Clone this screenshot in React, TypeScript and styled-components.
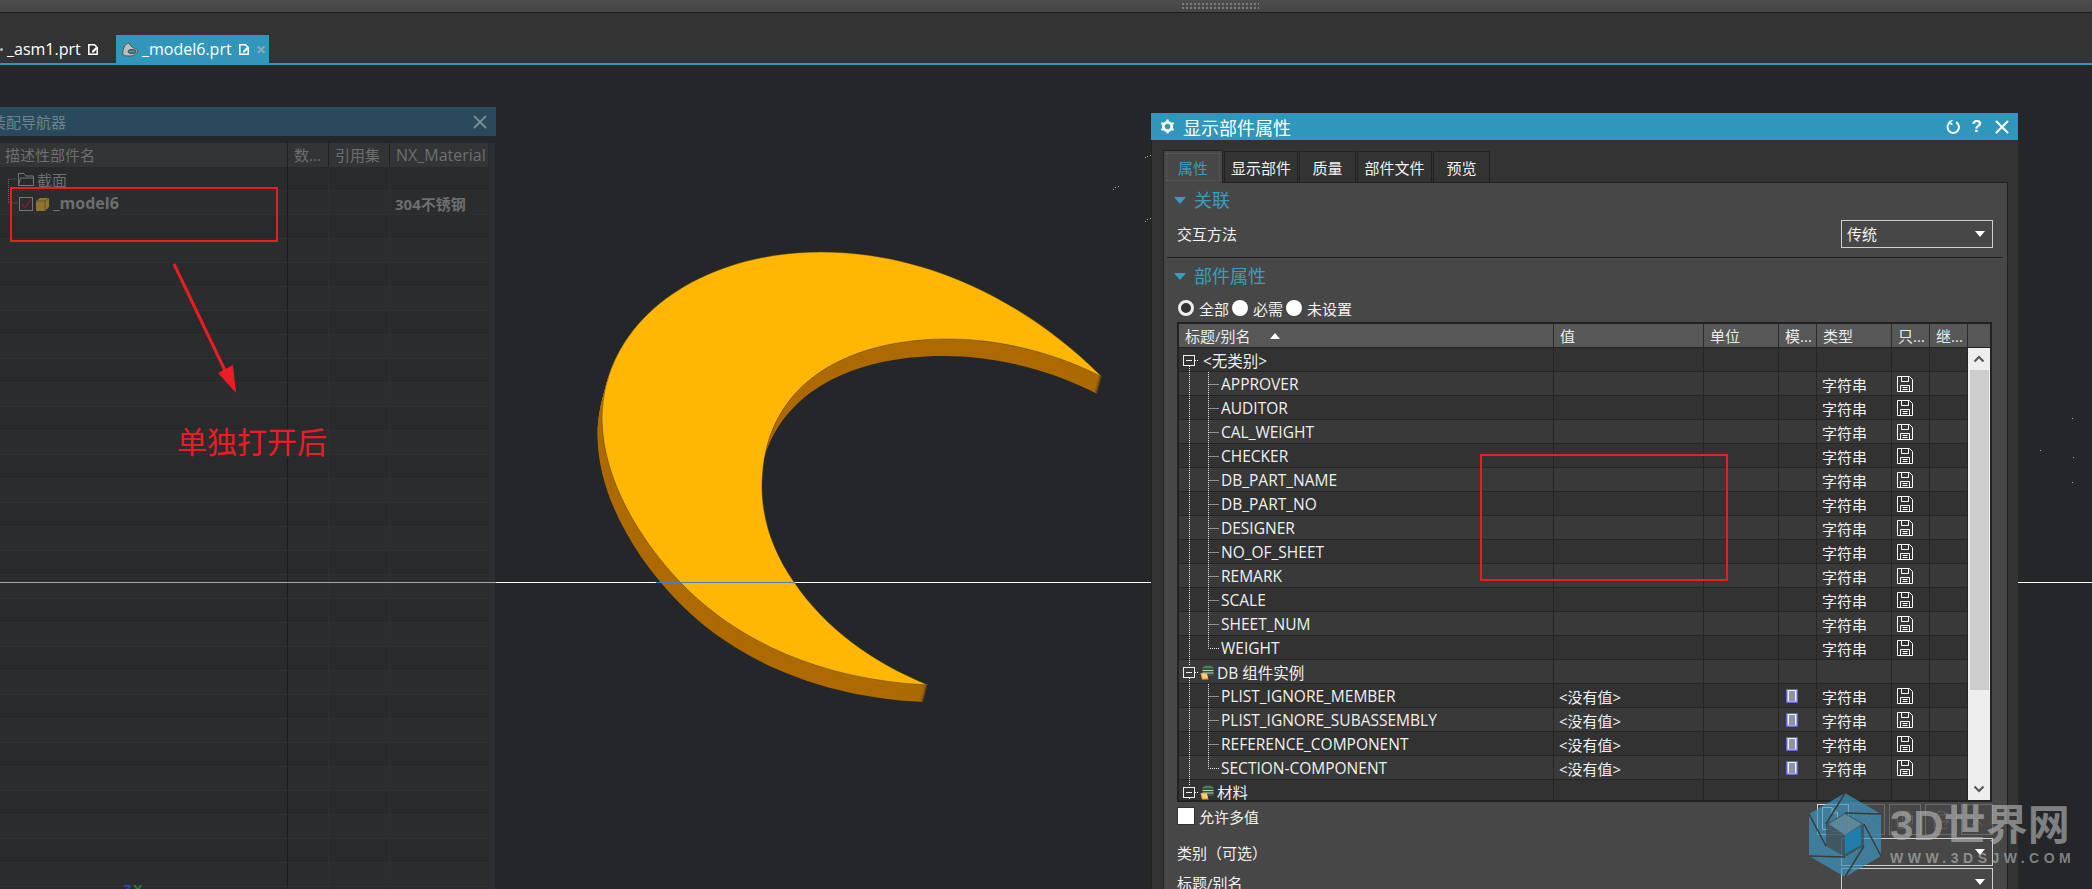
import React from "react";
import styled, { createGlobalStyle } from "styled-components";
import { Scissors, Files, ClipboardPaste, X } from "lucide-react";

const UI_FONT = `"Open Sans", "Noto Sans CJK SC", sans-serif`;
const TABLE_COLUMNS = "375px 150px 75px 38px 75px 38px 38px";

const CRESCENT =
  "M1102 377 C1025 300 925 252 821 252 C700 252 602 320 602 420 C603 480 640 540 680 582 C735 640 820 680 928 685 C872 662 825 628 794 582 C775 555 762 522 762 487 C762 385 845 339 948 339 C1000 339 1056 353 1102 377 Z";

const SPECKS = [
  [1145, 157], [1147, 156], [1150, 155], [1113, 189], [1115, 187], [1118, 186],
  [1145, 221], [1147, 219], [1150, 218], [2072, 418], [2040, 450], [2073, 457], [2072, 482],
];

const PROPERTY_ROWS: RowData[] = [
  { kind: "group", name: "<无类别>", first: true },
  { kind: "child", name: "APPROVER", type: "字符串", save: true },
  { kind: "child", name: "AUDITOR", type: "字符串", save: true },
  { kind: "child", name: "CAL_WEIGHT", type: "字符串", save: true },
  { kind: "child", name: "CHECKER", type: "字符串", save: true },
  { kind: "child", name: "DB_PART_NAME", type: "字符串", save: true },
  { kind: "child", name: "DB_PART_NO", type: "字符串", save: true },
  { kind: "child", name: "DESIGNER", type: "字符串", save: true },
  { kind: "child", name: "NO_OF_SHEET", type: "字符串", save: true },
  { kind: "child", name: "REMARK", type: "字符串", save: true },
  { kind: "child", name: "SCALE", type: "字符串", save: true },
  { kind: "child", name: "SHEET_NUM", type: "字符串", save: true },
  { kind: "last", name: "WEIGHT", type: "字符串", save: true },
  { kind: "group", name: "DB 组件实例", db: true },
  { kind: "child", name: "PLIST_IGNORE_MEMBER", value: "<没有值>", type: "字符串", save: true, doc: true },
  { kind: "child", name: "PLIST_IGNORE_SUBASSEMBLY", value: "<没有值>", type: "字符串", save: true, doc: true },
  { kind: "child", name: "REFERENCE_COMPONENT", value: "<没有值>", type: "字符串", save: true, doc: true },
  { kind: "last", name: "SECTION-COMPONENT", value: "<没有值>", type: "字符串", save: true, doc: true },
  { kind: "group", name: "材料", db: true },
];

type RowKind = "group" | "child" | "last";

type RowData = {
  kind: RowKind;
  name: string;
  value?: string;
  type?: string;
  save?: boolean;
  doc?: boolean;
  db?: boolean;
  first?: boolean;
};

function TreeGuide({ kind, first }: { kind: RowKind; first?: boolean }) {
  if (kind === "group") {
    return (
      <GuideSvg width={21} height={24} viewBox="0 0 21 24">
        <path
          d={first ? "M10.5 18V24M16 12.5H20" : "M10.5 0V6M10.5 18V24M16 12.5H20"}
          stroke="#eee"
          strokeDasharray="1 1"
          fill="none"
        />
        <rect x="4.5" y="7.5" width="11" height="10" fill="none" stroke="#eee" />
        <path d="M7 12.5H13" stroke="#eee" />
      </GuideSvg>
    );
  }
  return (
    <GuideSvg width={42} height={24} viewBox="0 0 42 24">
      <path d="M10.5 0V24" stroke="#eee" strokeDasharray="1 1" fill="none" />
      <path
        d={kind === "last" ? "M29.5 0V12.5H40" : "M29.5 0V24M29.5 12.5H40"}
        stroke="#eee"
        strokeDasharray="1 1"
        fill="none"
      />
    </GuideSvg>
  );
}

function DbIcon() {
  return (
    <svg width="14" height="15" viewBox="0 0 14 15">
      <ellipse cx="8" cy="3" rx="5.5" ry="2.5" fill="#4f7d53" />
      <rect x="2.5" y="3" width="11" height="8" fill="#39583f" />
      <path d="M2.5 5.5H13.5M2.5 8H13.5" stroke="#b8c8b8" />
      <path d="M0.5 8H7L8.5 14.5H2Z" fill="#f0a83a" />
      <path d="M2 10H7M2.5 12H7.5" stroke="#fff2c8" />
    </svg>
  );
}

function PageIcon() {
  return (
    <svg width="12" height="14" viewBox="0 0 12 14">
      <rect x="0" y="0" width="12" height="14" fill="#5f68d8" />
      <rect x="1.5" y="1" width="9" height="11.5" fill="#eef0ff" />
      <path d="M3 3H9M3 5H9M3 7H9M3 9H9M3 11H9" stroke="#33353d" />
    </svg>
  );
}

function FloppyIcon() {
  return (
    <svg width="16" height="16" viewBox="0 0 16 16" fill="none" stroke="#fff">
      <path d="M0.5 0.5H12.5L15.5 3.5V15.5H0.5Z" />
      <path d="M4.5 0.5V5.5H11.5V0.5" />
      <path d="M3.5 15.5V9.5H12.5V15.5M5.5 11.5H10.5M5.5 13.5H10.5" />
    </svg>
  );
}

function TabDocIcon() {
  return (
    <svg width="10" height="11" viewBox="0 0 10 11">
      <path d="M0.8 0.8H6.5L9.2 3.5V10.2H0.8Z" fill="none" stroke="#fff" strokeWidth="1.5" />
      <path d="M4 7L8 3L9.5 4.5L5.5 8.5H4Z" fill="#fff" />
    </svg>
  );
}

export default function App() {
  return (
    <Page>
      <GlobalStyle />
      <TopBar>
        <Grip />
      </TopBar>
      <TabStrip>
        <FileTab>
          <LeadDot />
          <span>_asm1.prt</span>
          <TabDocIcon />
        </FileTab>
        <FileTab $active>
          <TabModelIcon width="17" height="15" viewBox="0 0 17 15">
            <path d="M1 13C0 8 3 1 7 1C8 4 11 6 16 8C15 12 12 14 8 14C5 14 3 14 1 13Z" fill="#b9c0c2" stroke="#555" />
            <ellipse cx="10" cy="9.5" rx="4" ry="2" fill="#3c8aa8" stroke="#444" />
          </TabModelIcon>
          <span>_model6.prt</span>
          <TabDocIcon />
          <TabClose>×</TabClose>
        </FileTab>
      </TabStrip>
      <Workspace>
        <NavPanel>
          <NavTitle>
            <span>装配导航器</span>
            <X size={22} color="#7b8b94" strokeWidth={2} />
          </NavTitle>
          <NavBody>
            <NavHeader>
              <NavHeadCell>描述性部件名</NavHeadCell>
              <NavHeadCell>数...</NavHeadCell>
              <NavHeadCell>引用集</NavHeadCell>
              <NavHeadCell>NX_Material</NavHeadCell>
            </NavHeader>
            <NavRow $alt={false}>
              <NavCell>
                <svg width="34" height="24" viewBox="0 0 34 24">
                  <path d="M8.5 12V24M8.5 12H17" stroke="#666" strokeDasharray="1 1" fill="none" />
                  <path d="M18.5 18.5V6.5H24L26 9H33.5V18.5ZM18.5 18.5L20.5 11H33.5" stroke="#777" fill="none" />
                </svg>
                <NavLabel>截面</NavLabel>
              </NavCell>
              <NavCell />
              <NavCell />
              <NavCell />
            </NavRow>
            <NavRow $alt>
              <NavCell>
                <svg width="50" height="24" viewBox="0 0 50 24">
                  <path d="M8.5 0V12H18" stroke="#666" strokeDasharray="1 1" fill="none" />
                  <rect x="19.5" y="6.5" width="13" height="13" fill="none" stroke="#777" />
                  <path d="M22 13L25 17L31 8" stroke="#7c1f2c" strokeWidth="1.5" fill="none" />
                  <path d="M36 10L40 7H49V16L45 20H36Z" fill="#8f7330" />
                  <path d="M36 10H45V20M45 10L49 7" stroke="#5e5128" fill="none" />
                </svg>
                <NavStrong $offset={3} $size={16}>_model6</NavStrong>
              </NavCell>
              <NavCell />
              <NavCell />
              <NavCell>
                <NavStrong $offset={5} $size={15}>304不锈钢</NavStrong>
              </NavCell>
            </NavRow>
            {Array.from({ length: 30 }, (_, i) => (
              <NavRow key={i} $alt={i % 2 === 1}>
                <NavCell />
                <NavCell />
                <NavCell />
                <NavCell />
              </NavRow>
            ))}
          </NavBody>
        </NavPanel>

        <CanvasLayer viewBox="0 65 2092 824" width={2092} height={824}>
          <line x1="0" y1="582.5" x2="496" y2="582.5" stroke="#a9a9a9" />
          <line x1="496" y1="582.5" x2="2092" y2="582.5" stroke="#fff" />
          {Array.from({ length: 17 }, (_, i) => (
            <path
              key={i}
              d={CRESCENT}
              fill="#ac6a00"
              transform={`translate(${(-4.5 * (i + 1)) / 17} ${i + 1})`}
            />
          ))}
          <path d={CRESCENT} fill="#ffb703" stroke="#4d3a10" strokeWidth="0.5" />
          <line x1="656" y1="582.5" x2="794" y2="582.5" stroke="#3f7fc4" />
          {SPECKS.map(([x, y]) => (
            <rect key={`${x}-${y}`} x={x} y={y} width="1" height="1" fill="#a8a8a8" />
          ))}
          <text x="123" y="895" fontSize="14" fontWeight="700" fontFamily="Liberation Sans" fill="#2747c0">Z</text>
          <text x="133" y="895" fontSize="14" fontWeight="700" fontFamily="Liberation Sans" fill="#2f7a38">X</text>
        </CanvasLayer>

        <NavMarkBox />
        <NoteArrow width="80" height="140" viewBox="0 0 80 140">
          <path d="M6 5L62 122" stroke="#ed1c24" strokeWidth="3" fill="none" />
          <path d="M68 134L65 106L50 114Z" fill="#ed1c24" />
        </NoteArrow>
        <NoteText>单独打开后</NoteText>

        <Dialog>
          <DialogTitle>
            <TitleIcon viewBox="0 0 16 16">
              <circle cx="8" cy="8" r="4.5" fill="none" stroke="#fff" strokeWidth="3" />
              <path d="M8 0.5V3M8 13V15.5M1.5 4.2L3.6 5.5M12.4 10.5L14.5 11.8M1.5 11.8L3.6 10.5M12.4 5.5L14.5 4.2" stroke="#fff" strokeWidth="2.4" />
            </TitleIcon>
            <TitleText>显示部件属性</TitleText>
            <TitleTools>
              <svg width="14" height="14" viewBox="0 0 14 14" fill="none" stroke="#fff" strokeWidth="2">
                <path d="M4.5 2.2A5.7 5.7 0 1 0 10 2.2" />
                <path d="M6.5 0L3 2.4L6.5 4.6" strokeWidth="1.4" />
              </svg>
              <HelpMark>?</HelpMark>
              <TitleClose size={22} color="#fff" strokeWidth={2.2} />
            </TitleTools>
          </DialogTitle>
          <DialogBody>
            <TabRow>
              <PageTab $width={60} $active>
                <FocusBox>属性</FocusBox>
              </PageTab>
              <PageTab $width={74}>显示部件</PageTab>
              <PageTab $width={57}>质量</PageTab>
              <PageTab $width={75}>部件文件</PageTab>
              <PageTab $width={57}>预览</PageTab>
            </TabRow>
            <TabPanel>
              <SectionHead $height={34}>
                <SectionArrow />
                <SectionTitle>关联</SectionTitle>
              </SectionHead>
              <FormRow $height={33}>
                <FieldLabel>交互方法</FieldLabel>
                <SelectBox>
                  <span>传统</span>
                  <Arrow />
                </SelectBox>
              </FormRow>
              <Divider />
              <SectionHead $height={36}>
                <SectionArrow />
                <SectionTitle>部件属性</SectionTitle>
              </SectionHead>
              <RadioRow>
                <Radio $on />
                <RadioText>全部</RadioText>
                <Radio />
                <RadioText>必需</RadioText>
                <Radio />
                <RadioText>未设置</RadioText>
              </RadioRow>
              <PropTable>
                <HeadRow>
                  <HeadCell>
                    标题/别名
                    <SortArrow />
                  </HeadCell>
                  <HeadCell>值</HeadCell>
                  <HeadCell>单位</HeadCell>
                  <HeadCell>模...</HeadCell>
                  <HeadCell>类型</HeadCell>
                  <HeadCell>只...</HeadCell>
                  <HeadCell>继...</HeadCell>
                  <HeadCell />
                </HeadRow>
                <TableBody>
                  <RowsArea>
                    {PROPERTY_ROWS.map((row, i) => (
                      <PropRow key={row.name} $alt={i % 2 === 1}>
                        <NameCell>
                          <TreeGuide kind={row.kind} first={row.first} />
                          {row.db && <DbSlot><DbIcon /></DbSlot>}
                          <NameText $group={row.kind === "group" && !row.db}>{row.name}</NameText>
                        </NameCell>
                        <ValueCell>{row.value}</ValueCell>
                        <ValueCell />
                        <IconCell $pad={7}>{row.doc && <PageIcon />}</IconCell>
                        <ValueCell>{row.type}</ValueCell>
                        <IconCell $pad={5}>{row.save && <FloppyIcon />}</IconCell>
                        <ValueCell />
                      </PropRow>
                    ))}
                  </RowsArea>
                  <ScrollBar>
                    <ScrollButton viewBox="0 0 12 8">
                      <path d="M1.5 6.5L6 2L10.5 6.5" fill="none" stroke="#555" strokeWidth="2" />
                    </ScrollButton>
                    <ScrollThumb />
                    <ScrollButton viewBox="0 0 12 8">
                      <path d="M1.5 1.5L6 6L10.5 1.5" fill="none" stroke="#555" strokeWidth="2" />
                    </ScrollButton>
                  </ScrollBar>
                </TableBody>
              </PropTable>
              <ToolRow>
                <CheckGroup>
                  <CheckBox />
                  <FieldLabel>允许多值</FieldLabel>
                </CheckGroup>
                <ToolGroup>
                  <ToolButton $on>
                    <svg width="24" height="27" viewBox="0 0 24 27" fill="none" stroke="#fff">
                      <path d="M7 23.5H1.5V1.5H11L16.5 7V12M11 1.5V7H16.5" />
                      <circle cx="15" cy="20" r="6" stroke="#cde" />
                      <path d="M15 16.5V23.5M11.5 20H18.5" stroke="#cde" />
                    </svg>
                  </ToolButton>
                  <ToolButton><Scissors size={20} color="#666" strokeWidth={1} /></ToolButton>
                  <ToolButton><Files size={20} color="#666" strokeWidth={1} /></ToolButton>
                  <ToolButton><ClipboardPaste size={20} color="#666" strokeWidth={1} /></ToolButton>
                  <ToolButton><X size={20} color="#666" strokeWidth={1} /></ToolButton>
                </ToolGroup>
              </ToolRow>
              <FormRow $height={30}>
                <FieldLabel>类别（可选）</FieldLabel>
                <SelectBox>
                  <span />
                  <Arrow />
                </SelectBox>
              </FormRow>
              <FormRow $height={30}>
                <FieldLabel>标题/别名</FieldLabel>
                <SelectBox>
                  <span />
                  <Arrow />
                </SelectBox>
              </FormRow>
            </TabPanel>
          </DialogBody>
        </Dialog>

        <TableMarkBox />
        <Watermark>
          <svg width="72" height="84" viewBox="0 0 72 84">
            <path d="M36 0L72 21V63L36 84L0 63V21Z" fill="#3f93bb" fillOpacity="0.72" />
            <path d="M36 20L55 31V53L36 64L17 53V31Z" fill="#3d3d3d" fillOpacity="0.6" />
            <path d="M36 42L52 33V52L36 61Z" fill="#1f7eaa" />
            <path d="M20 31L36 21L53 31L36 42Z" fill="#6a9ab0" fillOpacity="0.7" />
            <path d="M36 0L17 31M72 21L36 20M72 63L55 31M36 84L55 53M0 63L36 64M0 21L17 53" stroke="#3a3a3a" strokeWidth="1.5" fill="none" />
          </svg>
          <BrandText>
            <BrandName>3D世界网</BrandName>
            <BrandUrl>WWW.3DSJW.COM</BrandUrl>
          </BrandText>
        </Watermark>
      </Workspace>
    </Page>
  );
}

const GlobalStyle = createGlobalStyle`
  html, body {
    margin: 0;
    padding: 0;
    background: #25262a;
  }
`;

const Page = styled.div`
  width: 2092px;
  height: 889px;
  overflow: hidden;
  display: flex;
  flex-direction: column;
  font-family: ${UI_FONT};
  color: #eee;
`;

const TopBar = styled.div`
  height: 12px;
  flex: none;
  display: flex;
  justify-content: center;
  padding-left: 348px;
  background: linear-gradient(#4d4d4d, #454545);
  border-bottom: 1px solid #1f1f1f;
`;

const Grip = styled.div`
  width: 78px;
  height: 8px;
  margin-top: 2px;
  background-image: radial-gradient(circle, #7d7d7d 1.2px, transparent 1.3px);
  background-size: 4px 4px;
`;

const TabStrip = styled.div`
  height: 50px;
  flex: none;
  display: flex;
  align-items: flex-end;
  background: #333;
  border-bottom: 2px solid #3296bb;
`;

const FileTab = styled.div<{ $active?: boolean }>`
  height: 28px;
  width: ${({ $active }) => ($active ? "153px" : "116px")};
  box-sizing: border-box;
  padding-left: ${({ $active }) => ($active ? "6px" : "0")};
  display: flex;
  align-items: center;
  gap: 7px;
  font-size: 16px;
  color: #fff;
  background: ${({ $active }) => ($active ? "#3296bb" : "transparent")};
`;

const TabModelIcon = styled.svg`
  margin-right: -4px;
`;

const LeadDot = styled.i`
  width: 3px;
  height: 3px;
  margin-right: -3px;
  border-radius: 50%;
  background: #bbb;
`;

const TabClose = styled.span`
  color: #8fa8b3;
  font-size: 18px;
  line-height: 1;
  font-weight: 700;
`;

const Workspace = styled.div`
  flex: 1;
  position: relative;
  background: #25262a;
`;

const NavPanel = styled.div`
  position: absolute;
  left: 0;
  top: 42px;
  width: 496px;
  bottom: 0;
  display: flex;
  flex-direction: column;
  overflow: hidden;
`;

const NavTitle = styled.div`
  height: 29px;
  flex: none;
  display: flex;
  align-items: center;
  justify-content: space-between;
  padding: 0 5px 0 0;
  background: #284a5c;
  font-size: 15px;
  color: #6e818c;

  span {
    margin-left: -9px;
  }
`;

const NavBody = styled.div`
  flex: 1;
  margin-top: 7px;
  width: 488px;
  border-right: 7px solid #2d2e31;
  overflow: hidden;
`;

const NAV_COLUMNS = "287px 41px 61px 97px";

const NavHeader = styled.div`
  height: 24px;
  display: grid;
  grid-template-columns: ${NAV_COLUMNS};
  background: #333436;
`;

const NavHeadCell = styled.div`
  padding-left: 6px;
  font-size: 15px;
  line-height: 24px;
  color: #6d6f71;
  border-left: 1px solid #202123;
  white-space: nowrap;
  overflow: hidden;

  &:first-child {
    border-left: none;
    padding-left: 5px;
  }

  &:last-child {
    font-size: 16px;
  }
`;

const NavRow = styled.div<{ $alt: boolean }>`
  height: 24px;
  box-sizing: border-box;
  display: grid;
  grid-template-columns: ${NAV_COLUMNS};
  background: ${({ $alt }) => ($alt ? "#2b2c2e" : "#292a2c")};
  border-bottom: 1px solid #2f3032;
`;

const NavCell = styled.div`
  display: flex;
  align-items: center;
  border-left: 1px solid #2e2f31;
  min-width: 0;

  &:first-child {
    border-left: none;
  }

  &:nth-child(2) {
    border-left-color: #1b1c1e;
  }
`;

const NavLabel = styled.span`
  margin-left: 3px;
  font-size: 15px;
  color: #6d6f71;
`;

const NavStrong = styled.span<{ $offset: number; $size: number }>`
  margin-left: ${({ $offset }) => $offset}px;
  font-size: ${({ $size }) => $size}px;
  font-weight: 700;
  color: #6c6e70;
  white-space: nowrap;
`;

const CanvasLayer = styled.svg`
  position: absolute;
  left: 0;
  top: 0;
  pointer-events: none;
`;

const NavMarkBox = styled.div`
  position: absolute;
  left: 10px;
  top: 122px;
  width: 264px;
  height: 51px;
  border: 2px solid #ed1c24;
`;

const NoteArrow = styled.svg`
  position: absolute;
  left: 168px;
  top: 194px;
`;

const NoteText = styled.div`
  position: absolute;
  left: 177px;
  top: 357px;
  font-size: 30px;
  line-height: 40px;
  color: #ed1c24;
  white-space: nowrap;
`;

const Dialog = styled.div`
  position: absolute;
  left: 1151px;
  top: 48px;
  width: 867px;
  bottom: 0;
  display: flex;
  flex-direction: column;
`;

const DialogTitle = styled.div`
  height: 27px;
  flex: none;
  display: flex;
  align-items: center;
  padding: 0 5px 0 9px;
  background: #3196bb;
`;

const TitleIcon = styled.svg`
  width: 15px;
  height: 15px;
`;

const TitleText = styled.span`
  margin-left: 8px;
  font-size: 18px;
  color: #fff;
`;

const TitleTools = styled.div`
  margin-left: auto;
  display: flex;
  align-items: center;
  gap: 12px;
`;

const TitleClose = styled(X)`
  margin-left: -3px;
`;

const HelpMark = styled.span`
  font-family: "Liberation Sans", sans-serif;
  font-size: 17px;
  font-weight: 700;
  color: #fff;
`;

const DialogBody = styled.div`
  flex: 1;
  min-height: 0;
  display: flex;
  flex-direction: column;
  padding: 10px 10px 0 11px;
  background: #333;
  border-left: 1px solid #222;
  overflow: hidden;
`;

const TabRow = styled.div`
  height: 32px;
  flex: none;
  display: flex;
  align-items: flex-end;
  gap: 1px;
`;

const PageTab = styled.div<{ $width: number; $active?: boolean }>`
  width: ${({ $width }) => $width}px;
  height: ${({ $active }) => ($active ? "33px" : "31px")};
  box-sizing: border-box;
  display: flex;
  align-items: center;
  justify-content: center;
  font-size: 15px;
  color: ${({ $active }) => ($active ? "#3a9dbd" : "#f2f2f2")};
  background: ${({ $active }) => ($active ? "#474747" : "#333")};
  border: 1px solid #222;
  border-bottom: none;
  margin-bottom: ${({ $active }) => ($active ? "-1px" : "0")};
  position: relative;
  z-index: ${({ $active }) => ($active ? 1 : 0)};
`;

const FocusBox = styled.div`
  width: 52px;
  height: 26px;
  display: flex;
  align-items: center;
  justify-content: center;
  border: 1px dotted #5f5f5f;
`;

const TabPanel = styled.div`
  flex: 1;
  min-height: 0;
  box-sizing: border-box;
  padding: 0 14px 0 13px;
  background: #474747;
  border: 1px solid #222;
  border-bottom: none;
`;

const SectionHead = styled.div<{ $height: number }>`
  height: ${({ $height }) => $height}px;
  display: flex;
  align-items: center;
  gap: 8px;
  font-size: 18px;
  color: #3a9dbd;
  margin-left: -3px;
`;

const SectionTitle = styled.span`
  margin-bottom: 2px;
`;

const SectionArrow = styled.i`
  width: 0;
  height: 0;
  border-left: 6.5px solid transparent;
  border-right: 6.5px solid transparent;
  border-top: 7px solid #3a9dbd;
`;

const FormRow = styled.div<{ $height: number }>`
  height: ${({ $height }) => $height}px;
  display: flex;
  align-items: center;
  justify-content: space-between;
`;

const FieldLabel = styled.span`
  font-size: 15px;
  color: #f2f2f2;
`;

const SelectBox = styled.div`
  width: 152px;
  height: 28px;
  box-sizing: border-box;
  display: flex;
  align-items: center;
  justify-content: space-between;
  padding: 0 7px 0 5px;
  border: 1px solid #cfcfcf;
  font-size: 15px;
  color: #f2f2f2;
`;

const Arrow = styled.i`
  width: 0;
  height: 0;
  border-left: 5px solid transparent;
  border-right: 5px solid transparent;
  border-top: 6px solid #fff;
`;

const Divider = styled.div`
  height: 1px;
  margin: 7px -10px 0 -10px;
  background: #222;
`;

const RadioRow = styled.div`
  height: 28px;
  display: flex;
  align-items: center;
`;

const Radio = styled.i<{ $on?: boolean }>`
  width: 16px;
  height: 16px;
  box-sizing: border-box;
  border-radius: 50%;
  margin-left: 1px;
  background: ${({ $on }) => ($on ? "#333" : "#fff")};
  border: ${({ $on }) => ($on ? "3px solid #eee" : "none")};
`;

const RadioText = styled.span`
  margin: 0 2px 0 5px;
  font-size: 15px;
  color: #f2f2f2;
`;

const PropTable = styled.div`
  width: 815px;
  height: 480px;
  box-sizing: border-box;
  border: 2px solid #222;
  display: flex;
  flex-direction: column;
  overflow: hidden;
`;

const HeadRow = styled.div`
  height: 24px;
  flex: none;
  display: grid;
  grid-template-columns: ${TABLE_COLUMNS} 1fr;
  background: #575757;
  border-bottom: 1px solid #222;
  box-sizing: border-box;
`;

const HeadCell = styled.div`
  display: flex;
  align-items: center;
  padding-left: 6px;
  font-size: 15px;
  color: #ececec;
  border-right: 1px solid #2a2a2a;
  white-space: nowrap;

  &:last-child {
    border-right: none;
  }
`;

const SortArrow = styled.i`
  margin-left: 19px;
  width: 0;
  height: 0;
  border-left: 5.5px solid transparent;
  border-right: 5.5px solid transparent;
  border-bottom: 6px solid #fff;
`;

const TableBody = styled.div`
  flex: 1;
  min-height: 0;
  display: flex;
`;

const RowsArea = styled.div`
  width: 789px;
  overflow: hidden;
`;

const PropRow = styled.div<{ $alt: boolean }>`
  height: 24px;
  box-sizing: border-box;
  display: grid;
  grid-template-columns: ${TABLE_COLUMNS};
  background: ${({ $alt }) => ($alt ? "#393939" : "#323232")};
  border-bottom: 1px solid #262626;
`;

const NameCell = styled.div`
  display: flex;
  align-items: center;
  border-right: 1px solid #262626;
  min-width: 0;
`;

const GuideSvg = styled.svg`
  flex: none;
`;

const DbSlot = styled.span`
  display: flex;
  margin-right: 3px;
`;

const NameText = styled.span<{ $group?: boolean }>`
  margin-left: ${({ $group }) => ($group ? "3px" : "0")};
  font-size: 15.5px;
  color: #f0f0f0;
  white-space: nowrap;
`;

const ValueCell = styled.div`
  display: flex;
  align-items: center;
  padding-left: 5px;
  font-size: 15px;
  color: #f0f0f0;
  border-right: 1px solid #262626;
  white-space: nowrap;
`;

const IconCell = styled.div<{ $pad: number }>`
  display: flex;
  align-items: center;
  padding-left: ${({ $pad }) => $pad}px;
  border-right: 1px solid #262626;
`;

const ScrollBar = styled.div`
  width: 22px;
  flex: none;
  display: flex;
  flex-direction: column;
  align-items: center;
  background: #eee;
`;

const ScrollButton = styled.svg`
  width: 12px;
  height: 8px;
  flex: none;
  margin: 7px 0;
`;

const ScrollThumb = styled.div`
  width: 19px;
  height: 320px;
  background: #cdcdcd;
  margin-bottom: auto;
`;

const ToolRow = styled.div`
  height: 35px;
  display: flex;
  align-items: center;
`;

const CheckGroup = styled.div`
  display: flex;
  align-items: center;
  gap: 5px;
  margin-top: -7px;
`;

const CheckBox = styled.i`
  width: 16px;
  height: 16px;
  background: #fff;
  box-shadow: 0 0 0 1px #333;
  margin-left: 1px;
`;

const ToolGroup = styled.div`
  margin-left: auto;
  display: flex;
  gap: 4px;
`;

const ToolButton = styled.div<{ $on?: boolean }>`
  width: 32px;
  height: 31px;
  box-sizing: border-box;
  display: flex;
  align-items: center;
  justify-content: center;
  border: 1px solid ${({ $on }) => ($on ? "#d8d8d8" : "#6a6a6a")};
`;

const TableMarkBox = styled.div`
  position: absolute;
  left: 1480px;
  top: 389px;
  width: 244px;
  height: 123px;
  border: 2px solid #ed1c24;
`;

const Watermark = styled.div`
  position: absolute;
  left: 1809px;
  top: 728px;
  display: flex;
  align-items: flex-start;
  gap: 9px;
`;

const BrandText = styled.div`
  margin-top: 8px;
  display: flex;
  flex-direction: column;
`;

const BrandName = styled.div`
  font-family: "Liberation Sans", "Noto Sans CJK SC", sans-serif;
  font-size: 42px;
  line-height: 50px;
  font-weight: 700;
  color: rgba(190, 190, 190, 0.6);
  white-space: nowrap;
`;

const BrandUrl = styled.div`
  font-family: "Liberation Sans", sans-serif;
  font-size: 14px;
  line-height: 14px;
  font-weight: 700;
  letter-spacing: 4.5px;
  color: rgba(190, 190, 190, 0.6);
  white-space: nowrap;
`;
